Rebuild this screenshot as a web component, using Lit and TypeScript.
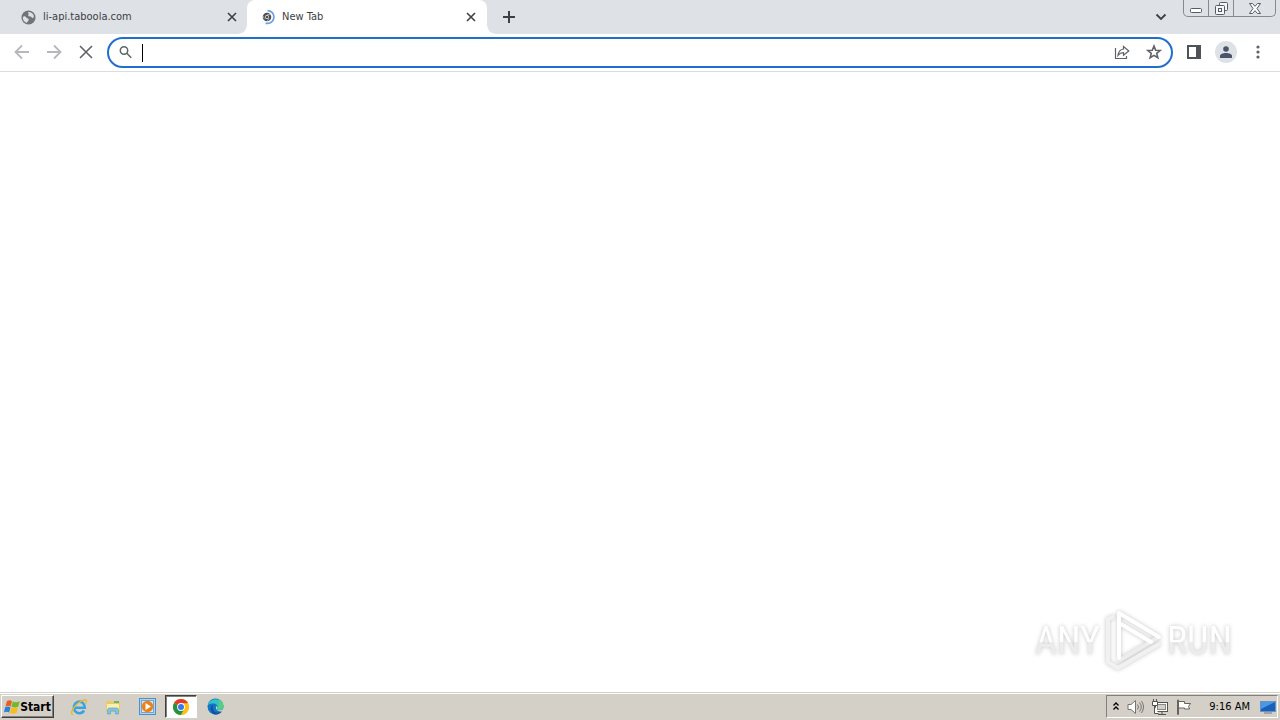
import { LitElement, html, css, svg } from "lit";
import { customElement } from "lit/decorators.js";

const cross = html`<svg width="10" height="10" viewBox="0 0 10 10" fill="none" stroke="#3c4043" stroke-width="1.6"><path d="M1 1l8 8M9 1l-8 8"/></svg>`;

const chromeMark = svg`
  <circle cx="8" cy="8" r="8" fill="#fbc116"/>
  <path d="M8 8L1.07 4A8 8 0 0 1 14.93 4z" fill="#e33b2e"/>
  <path d="M1.07 4A8 8 0 0 0 8 16L11.5 10L8 8z" fill="#229342"/>
  <path d="M8 4.2H15A8 8 0 0 1 8 16L11.4 10z" fill="#fbc116"/>
  <circle cx="8" cy="8" r="3.9" fill="#fff"/>
  <circle cx="8" cy="8" r="3" fill="#3b78e7"/>`;

@customElement("browser-tabs")
class BrowserTabs extends LitElement {
  static styles = css`
    :host { display: block; background: #dee1e6; font: 11px/14px "DejaVu Sans Condensed", "Liberation Sans", sans-serif; }
    .strip { display: flex; height: 34px; padding-left: 8px; }
    button { border: 0; padding: 0; margin: 0; background: none; display: flex; align-items: center; justify-content: center; font: inherit; }
    svg { display: block; flex: none; }
    .tab { position: relative; box-sizing: border-box; flex: 0 1 240px; min-width: 0; display: flex; align-items: center; gap: 7px; padding: 0 9px 0 13px; color: #3c4043; }
    .tab.first { flex-basis: 239px; }
    .tab .title { flex: 1; min-width: 0; white-space: nowrap; overflow: hidden; justify-content: flex-start; color: inherit; text-align: left; }
    .close { width: 12px; height: 16px; }
    .active { background: #fff; border-radius: 8px 8px 0 0; padding-right: 10px; }
    .active::before, .active::after { content: ""; position: absolute; bottom: 0; width: 8px; height: 8px; }
    .active::before { left: -8px; background: radial-gradient(circle at 0 0, transparent 7px, #fff 8px); }
    .active::after { right: -8px; background: radial-gradient(circle at 100% 0, transparent 7px, #fff 8px); }
    .plus { width: 28px; margin-left: 8px; }
    .space { flex: 1; }
    .search { width: 28px; margin-right: 8px; }
    .window { display: flex; align-self: flex-start; box-sizing: border-box; height: 17px; margin-right: 4px; border: 1px solid #858a92; border-top: 0; border-radius: 0 0 5px 5px; }
    .window button { width: 25px; border-right: 1px solid #858a92; }
    .window button.wide { width: 41px; border-right: 0; }
  `;
  render() {
    return html`<div class="strip" role="tablist">
      <div class="tab first">
        <svg width="15" height="15" viewBox="0 0 16 16"><circle cx="8" cy="8" r="7.5" fill="#70757a"/><path d="M2 7.5C3.5 6 5 7 5.8 8.2C6.6 9.2 8.5 8.8 8.2 10.6C8 12 6.2 12.2 6.4 13.8A6 6 0 0 1 2 7.5zM7.5 2.2C10 2 12 3.2 13.4 5.2C13.9 7 13.6 8 12.6 8.6C11.4 8.8 11.4 7.2 10 7C8 7 7.2 6.2 8 4.9C8.9 4.2 7.3 3.6 7.5 2.2z" fill="#dee1e6"/></svg>
        <button class="title" role="tab">li-api.taboola.com</button>
        <button class="close" aria-label="Close li-api.taboola.com">${cross}</button>
      </div>
      <div class="tab active">
        <svg width="15" height="16" viewBox="0 0 15 16" fill="none"><circle cx="7" cy="8" r="3.1" stroke="#4b4e53" stroke-width="2.4"/><path d="M7 5.600h4M4.400 9.700L2.800 6.800M9 9.500L7 12.600" stroke="#e4e5e7" stroke-width=".6"/><circle cx="7" cy="8" r="1.300" fill="#4b4e53"/><path d="M7.500 1.600A6.400 6.400 0 0 1 7.500 14.400H5.500" stroke="#6d9fdd" stroke-width="1.700"/></svg>
        <button class="title" role="tab" aria-selected="true">New Tab</button>
        <button class="close" aria-label="Close New Tab">${cross}</button>
      </div>
      <button class="plus" aria-label="New tab"><svg width="12" height="12" viewBox="0 0 12 12" stroke="#3c4043" stroke-width="2"><path d="M6 0v12M0 6h12"/></svg></button>
      <div class="space"></div>
      <button class="search" aria-label="Search tabs"><svg width="12" height="8" viewBox="0 0 12 8" fill="none" stroke="#3c4043" stroke-width="1.8"><path d="M1.5 1.5L6 6l4.500-4.500"/></svg></button>
      <div class="window">
        <button aria-label="Minimize"><svg width="12" height="15" viewBox="0 0 12 15"><rect x=".5" y="7.500" width="11" height="4" rx="1" fill="#fff" stroke="#565b66"/></svg></button>
        <button aria-label="Restore"><svg width="13" height="13" viewBox="0 0 13 13" fill="#f5f6f7" stroke="#565b66"><rect x="4.500" y=".5" width="8" height="8" rx="1"/><rect x=".5" y="3.500" width="9" height="9" rx="1"/><rect x="3.500" y="6.500" width="3" height="3"/></svg></button>
        <button class="wide" aria-label="Close window"><svg width="12" height="11" viewBox="0 0 12 11"><path d="M.5.5h3L6 3.300 8.500.5h3L8 5.500l3.500 5h-3L6 7.700 3.500 10.500h-3L4 5.500z" fill="#fff" stroke="#565b66"/></svg></button>
      </div>
    </div>`;
  }
}

@customElement("browser-toolbar")
class BrowserToolbar extends LitElement {
  static styles = css`
    :host { display: block; background: #fff; }
    .bar { display: flex; align-items: center; height: 37px; padding: 0 6px; border-bottom: 1px solid #dadce0; }
    button { border: 0; padding: 0 0 2px; background: none; flex: 0 0 32px; height: 28px; display: flex; align-items: center; justify-content: center; }
    svg { display: block; flex: none; }
    .omni { flex: 1; min-width: 0; box-sizing: border-box; display: flex; align-items: center; height: 31px; margin: 0 5px; border: 2px solid #1f6fd0; border-radius: 16px; padding-left: 10px; padding-right: 1px; }
    .omni input { flex: 1; min-width: 0; border: 0; outline: 0; padding: 0; background: none; font: 14px/18px "Liberation Sans", sans-serif; caret-color: transparent; }
    .caret { width: 1px; height: 18px; background: #000; margin-left: 10px; }
    .avatar span { width: 22px; height: 22px; border-radius: 50%; background: #dee1e6; display: flex; align-items: center; justify-content: center; }
  `;
  render() {
    return html`<div class="bar">
      <button aria-label="Back"><svg width="16" height="16" viewBox="0 0 16 16" fill="none" stroke="#b6b8bb" stroke-width="1.8"><path d="M15 8H2M8 1.500L1.500 8 8 14.500"/></svg></button>
      <button aria-label="Forward"><svg width="16" height="16" viewBox="0 0 16 16" fill="none" stroke="#b6b8bb" stroke-width="1.800"><path d="M1 8h13M8 1.500L14.500 8 8 14.500"/></svg></button>
      <button aria-label="Stop"><svg width="14" height="14" viewBox="0 0 14 14" stroke="#5f6368" stroke-width="1.600"><path d="M1 1l12 12M13 1l-12 12"/></svg></button>
      <div class="omni">
        <svg width="13" height="13" viewBox="0 0 13 13" fill="none" stroke="#5f6368" stroke-width="1.500"><circle cx="5" cy="4.500" r="3.700"/><path d="M7.800 7.300l4.400 4.400"/></svg>
        <span class="caret"></span>
        <input type="text" aria-label="Address and search bar">
        <button aria-label="Share"><svg width="16" height="16" viewBox="0 0 16 16" fill="none" stroke="#5f6368" stroke-width="1.200"><path d="M1.500 4v10.500h11V12M9.500 2.500L14.800 7 9.500 11.300V8.700C7.200 8.700 5.500 9.400 4 11.300 4.500 8 6.300 5.500 9.500 5z"/></svg></button>
        <button aria-label="Bookmark"><svg width="16" height="16" viewBox="0 0 16 16" fill="none" stroke="#5f6368" stroke-width="1.600"><path d="M8 2L9.700 6.200 14.200 6.500 10.700 9.400 11.900 13.800 8 11.400 4.100 13.800 5.300 9.400 1.800 6.500 6.300 6.200z"/></svg></button>
      </div>
      <button aria-label="Side panel"><svg width="14" height="14" viewBox="0 0 14 14"><path fill="#4f5358" fill-rule="evenodd" d="M0 0h14v14H0zM2 2v10h7V2z"/></svg></button>
      <button class="avatar" aria-label="Profile"><span><svg width="12" height="12" viewBox="0 0 12 12" fill="#48546b"><circle cx="6" cy="3" r="2.800"/><path d="M0 12V10C0 8 3 7 6 7s6 1 6 3v2z"/></svg></span></button>
      <button aria-label="Menu"><svg width="4" height="14" viewBox="0 0 4 14" fill="#5f6368"><circle cx="2" cy="2" r="1.600"/><circle cx="2" cy="7" r="1.600"/><circle cx="2" cy="12" r="1.600"/></svg></button>
    </div>`;
  }
}

@customElement("run-watermark")
class RunWatermark extends LitElement {
  static styles = css`
    :host { display: flex; align-items: center; gap: 5px; font: 38px/60px "Roboto Condensed", "Liberation Sans Narrow", "Open Sans Condensed", "Roboto", sans-serif; filter: drop-shadow(0 0 2px #c4c4c4); }
    span { color: transparent; background: linear-gradient(#fff 0 52%, #ececec 52%); background-clip: text; -webkit-background-clip: text; }
    svg { display: block; }
  `;
  render() {
    return html`<span>ANY</span>
      <svg width="57" height="62" viewBox="0 0 57 62" fill="none" stroke-linejoin="round" stroke-linecap="round">
        <path d="M8 7L3 9v43l10 6L54 34" stroke="#f1f1f1" stroke-width="4"/>
        <path d="M15 50L52 28" stroke="#ededed" stroke-width="4"/>
        <path d="M14 48V3L54 27M14 13L46 32" stroke="#fff" stroke-width="4"/>
      </svg>
      <span>RUN</span>`;
  }
}

@customElement("task-bar")
class TaskBar extends LitElement {
  static styles = css`
    :host { display: block; background: #d4d0c8; font: 11px/14px "DejaVu Sans Condensed", "Liberation Sans", sans-serif; color: #000; }
    .bar { display: flex; align-items: center; box-sizing: border-box; height: 28px; padding: 2px 2px 2px 1px; border-top: 1px solid #d4d0c8; box-shadow: inset 0 1px #fff; }
    button { border: 0; padding: 0; margin: 0; background: none; display: flex; align-items: center; justify-content: center; font: inherit; color: inherit; }
    svg { display: block; flex: none; }
    .start { box-sizing: border-box; width: 53px; height: 23px; font-weight: bold; font-size: 12px; border: 1px solid; border-color: #fff #404040 #404040 #fff; box-shadow: inset -1px -1px #808080; margin-right: 9px; }
    .app { box-sizing: border-box; width: 32px; height: 23px; margin-right: 2px; }
    .on { background: #fff; border: 1px solid; border-color: #404040 #fff #fff #404040; box-shadow: inset 1px 1px #808080; }
    .space { flex: 1; }
    .tray { box-sizing: border-box; height: 23px; display: flex; align-items: center; gap: 8px; padding: 0 1px 0 6px; border: 1px solid; border-color: #808080 #fff #fff #808080; }
    time { margin: 0 2px 0 9px; white-space: nowrap; }
  `;
  render() {
    return html`<div class="bar">
      <button class="start"><svg width="16" height="16" viewBox="0 0 16 16"><path d="M3 2C5 1 6.500 1.200 8 2.200L6.700 7.500C5 6.500 3.500 6.500 1.500 7.300z" fill="#e8601c"/><path d="M8.800 2.500C11 3.500 13 3.400 15.800 2.300L14.200 7.800C12 8.700 9.500 8.700 7.500 7.700z" fill="#75b72b"/><path d="M1.200 8C3 7.200 4.900 7.200 6.500 8.200L5.100 13.400C3.500 12.400 2 12.400 0 13.300z" fill="#2d80d5"/><path d="M7.300 8.500C9.500 9.500 11.500 9.500 14 8.600L12.500 14C10 15 8 14.900 5.900 13.900z" fill="#f8bd1a"/></svg>Start</button>
      <button class="app" aria-label="Internet Explorer"><svg width="18" height="18" viewBox="0 0 18 18" fill="none"><path d="M14 12.500A5.500 5.800 0 1 1 14.800 9.700H5" stroke="#3aa4e0" stroke-width="2.600"/><path d="M3 16.500C-1 16 4 8 9 4.500S18 .5 15.800 5.500" stroke="#e7b832" stroke-width="1.400"/></svg></button>
      <button class="app" aria-label="File Explorer"><svg width="16" height="16" viewBox="0 0 16 16"><path d="M1 3l1-1h4l1 1h8v10H1z" fill="#e9ca69"/><path d="M2 5h12v7H2z" fill="#fbeeb0"/><path d="M9 2h5v2H9z" fill="#68b764"/><path d="M2.500 15V11a2 2 0 0 1 2-2h7a2 2 0 0 1 2 2v4h-3v-3h-5v3z" fill="#80c5e4" stroke="#4a9cc5" stroke-width=".6"/></svg></button>
      <button class="app" aria-label="Media Player"><svg width="17" height="17" viewBox="0 0 17 17"><rect x=".5" y=".5" width="16" height="16" fill="#b2d5ef" stroke="#528fc3"/><rect x="2.500" y="2.500" width="12" height="12" fill="#d6e9f7" stroke="#6ea7d3"/><circle cx="8.500" cy="8.500" r="5.700" fill="#ef8015"/><path d="M6.500 5l5.500 3.500L6.500 12z" fill="#fff"/></svg></button>
      <button class="app on" aria-label="Chrome"><svg width="16" height="16" viewBox="0 0 16 16">${chromeMark}</svg></button>
      <button class="app" aria-label="Edge"><svg width="17" height="17" viewBox="0 0 17 17"><circle cx="8.500" cy="8.500" r="8" fill="#1374c3"/><path d="M.7 7.500A8 8 0 0 1 16.500 8.500C16.500 11 14.500 12 12.500 12S9.500 11 10.300 9.500C11 7.500 9 5.500 6.500 5.500 4 5.400 2 6 .7 7.500z" fill="#32c3c7"/><path d="M11 1A8 8 0 0 1 16.500 8.500C16.500 11 14.500 12 12.500 12S9.500 11 10.300 9.500C12.500 7 13 4 11 1z" fill="#54cf83"/><path d="M6.500 7C4.500 9 6 14.500 10.500 14.700 12.500 14.700 14 14 15.200 13.100A8 8 0 0 1 7 16.300C3 14 2.500 8 6.500 7z" fill="#124f9d"/><path d="M9 8c2 1 .5 2.500 1 3.200C10.700 12.500 14 12.700 16.500 11l-.8 2.500C12 14 8 12.500 9 8z" fill="#d4d0c8"/></svg></button>
      <div class="space"></div>
      <div class="tray">
        <svg width="6" height="9" viewBox="0 0 6 9" fill="none" stroke="#000" stroke-width="1.300"><path d="M.5 3.500L3 1l2.500 2.500M.5 7.500L3 5l2.500 2.500"/></svg>
        <svg width="17" height="16" viewBox="0 0 17 16" fill="none" stroke="#77756f"><path d="M1 5.500h3L8.500 1.500v13L4 10.500H1z" fill="#fff"/><path d="M10.500 5.500q2 2.500 0 5M12.500 3.500q3.500 4.500 0 9M14.500 2q4 6 0 12"/></svg>
        <svg width="16" height="16" viewBox="0 0 16 16" fill="#fff" stroke="#55534f"><rect x="3.500" y="3.500" width="12" height="9"/><rect x="5.500" y="5.500" width="8" height="5" fill="#d4d0c8" stroke="#888"/><path d="M6 15.500h8M10 13v2"/><path d="M.5 2.500h5v4h-5zM1.500 0v2M4.500 0v2M2.500 7v7.500h4" /></svg>
        <svg width="16" height="16" viewBox="0 0 16 16" fill="#fff" stroke="#66645f"><path d="M1.500 1v14.500h1V1zM2.500 2.500h6v2h6l-2 3 1 2.500h-5V9h-6z"/></svg>
        <time>9:16 AM</time>
        <svg width="16" height="14" viewBox="0 0 16 14"><rect x=".5" y="1.500" width="15" height="10" fill="#1760bb" stroke="#6c92bd"/><path d="M1 2h14L1 9z" fill="#4a98e5"/><path d="M4 13h8" stroke="#777"/></svg>
      </div>
    </div>`;
  }
}

@customElement("app-root")
class AppRoot extends LitElement {
  static styles = css`
    :host { display: flex; flex-direction: column; min-height: 100vh; background: #fff; }
    main { flex: 1; display: flex; align-items: flex-end; justify-content: flex-end; padding: 0 48px 20px 0; }
  `;
  render() {
    return html`<browser-tabs></browser-tabs><browser-toolbar></browser-toolbar><main><run-watermark></run-watermark></main><task-bar></task-bar>`;
  }
}
